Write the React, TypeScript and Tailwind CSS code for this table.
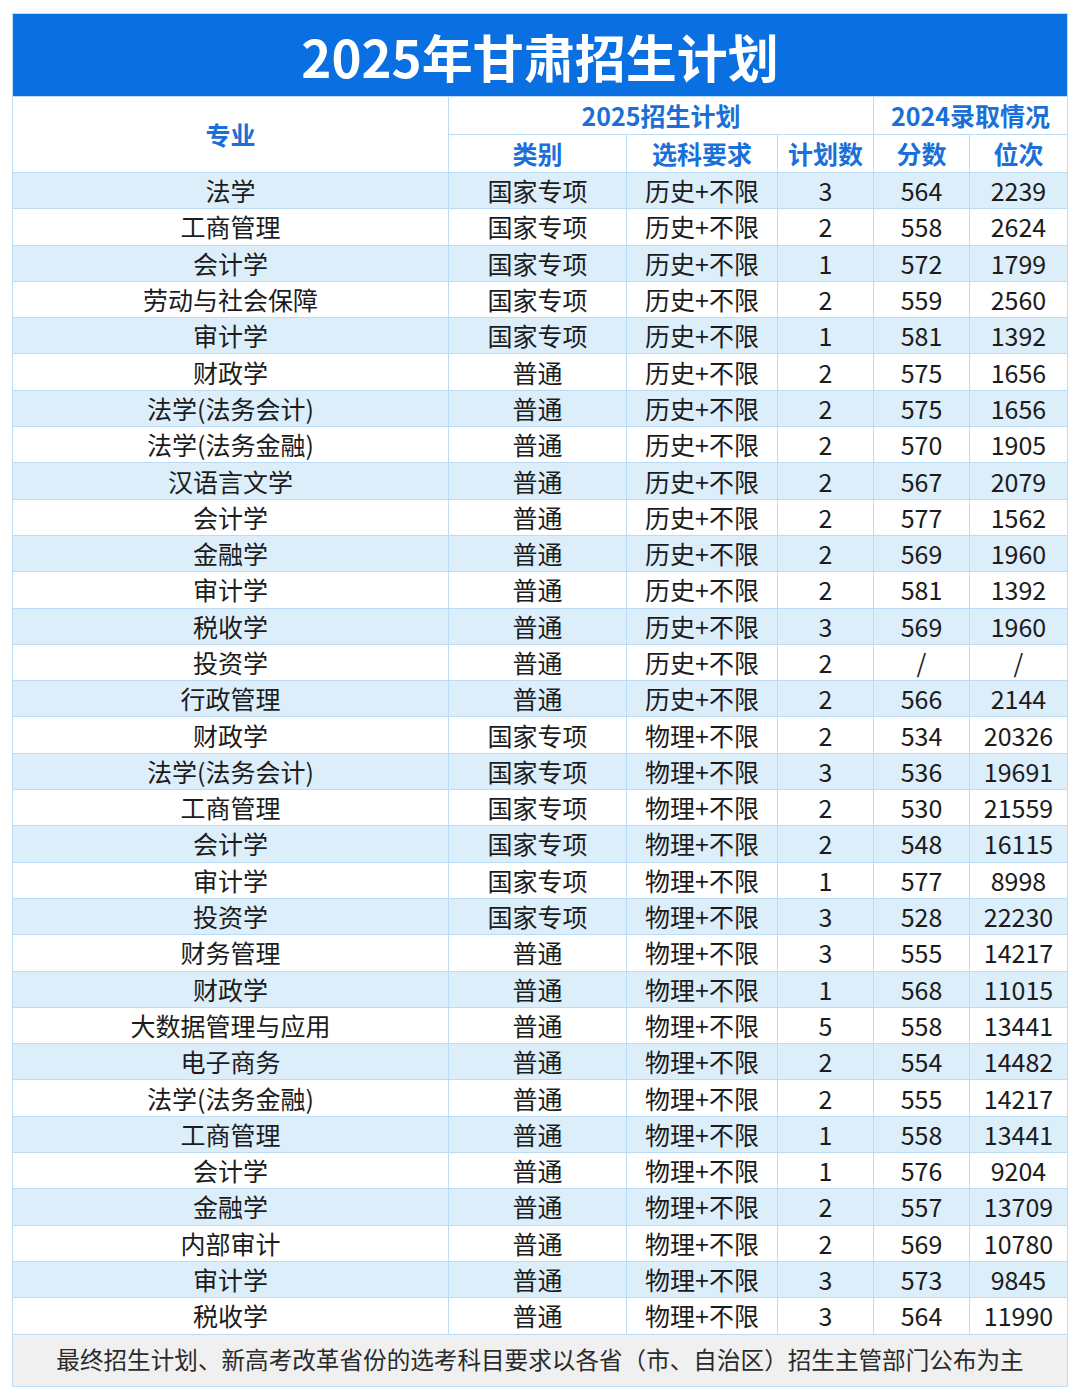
import React from "react";

type Row = [string, string, string, string, string, string];

const rows: Row[] = [
  ["法学", "国家专项", "历史+不限", "3", "564", "2239"],
  ["工商管理", "国家专项", "历史+不限", "2", "558", "2624"],
  ["会计学", "国家专项", "历史+不限", "1", "572", "1799"],
  ["劳动与社会保障", "国家专项", "历史+不限", "2", "559", "2560"],
  ["审计学", "国家专项", "历史+不限", "1", "581", "1392"],
  ["财政学", "普通", "历史+不限", "2", "575", "1656"],
  ["法学(法务会计)", "普通", "历史+不限", "2", "575", "1656"],
  ["法学(法务金融)", "普通", "历史+不限", "2", "570", "1905"],
  ["汉语言文学", "普通", "历史+不限", "2", "567", "2079"],
  ["会计学", "普通", "历史+不限", "2", "577", "1562"],
  ["金融学", "普通", "历史+不限", "2", "569", "1960"],
  ["审计学", "普通", "历史+不限", "2", "581", "1392"],
  ["税收学", "普通", "历史+不限", "3", "569", "1960"],
  ["投资学", "普通", "历史+不限", "2", "/", "/"],
  ["行政管理", "普通", "历史+不限", "2", "566", "2144"],
  ["财政学", "国家专项", "物理+不限", "2", "534", "20326"],
  ["法学(法务会计)", "国家专项", "物理+不限", "3", "536", "19691"],
  ["工商管理", "国家专项", "物理+不限", "2", "530", "21559"],
  ["会计学", "国家专项", "物理+不限", "2", "548", "16115"],
  ["审计学", "国家专项", "物理+不限", "1", "577", "8998"],
  ["投资学", "国家专项", "物理+不限", "3", "528", "22230"],
  ["财务管理", "普通", "物理+不限", "3", "555", "14217"],
  ["财政学", "普通", "物理+不限", "1", "568", "11015"],
  ["大数据管理与应用", "普通", "物理+不限", "5", "558", "13441"],
  ["电子商务", "普通", "物理+不限", "2", "554", "14482"],
  ["法学(法务金融)", "普通", "物理+不限", "2", "555", "14217"],
  ["工商管理", "普通", "物理+不限", "1", "558", "13441"],
  ["会计学", "普通", "物理+不限", "1", "576", "9204"],
  ["金融学", "普通", "物理+不限", "2", "557", "13709"],
  ["内部审计", "普通", "物理+不限", "2", "569", "10780"],
  ["审计学", "普通", "物理+不限", "3", "573", "9845"],
  ["税收学", "普通", "物理+不限", "3", "564", "11990"],
];

const font = { fontFamily: '"Noto Sans CJK SC", "Noto Sans", sans-serif' };

export default function App() {
  return (
    <div className="min-h-[1399px] w-[1080px] bg-white pl-[12px] pt-[13px]" style={font}>
      <div className="grid w-[1056px] grid-cols-[435px_177px_150px_95px_95px_97px] grid-rows-[82px_37px_37px_repeat(32,35.3px)_51px] gap-px border border-[#bcdbf5] bg-[#bcdbf5]">
        <div className="col-span-6 flex items-center justify-center bg-[#0a6fe0] pt-[2px] text-[51px] font-bold leading-none text-white">
          2025年甘肃招生计划
        </div>
        <div className="row-span-2 flex items-center justify-center bg-white text-[25px] font-bold leading-none text-[#1a6fd8]">
          专业
        </div>
        <div className="col-span-3 flex items-center justify-center bg-white text-[25px] font-bold leading-none text-[#1a6fd8]">
          2025招生计划
        </div>
        <div className="col-span-2 flex items-center justify-center bg-white text-[25px] font-bold leading-none text-[#1a6fd8]">
          2024录取情况
        </div>
        {["类别", "选科要求", "计划数", "分数", "位次"].map((h) => (
          <div
            key={h}
            className="flex items-center justify-center bg-white text-[25px] font-bold leading-none text-[#1a6fd8]"
          >
            {h}
          </div>
        ))}
        {rows.map((r, i) =>
          r.map((c, j) => (
            <div
              key={`${i}-${j}`}
              className={`flex items-center justify-center text-[25px] leading-none text-[#1c1c1c] ${
                i % 2 === 0 ? "bg-[#ddeefb]" : "bg-white"
              }`}
            >
              {c}
            </div>
          ))
        )}
        <div className="col-span-6 flex items-center justify-center bg-[#f0f0f0] text-[23.6px] leading-none text-[#2a2a2a]">
          最终招生计划、新高考改革省份的选考科目要求以各省（市、自治区）招生主管部门公布为主
        </div>
      </div>
    </div>
  );
}
